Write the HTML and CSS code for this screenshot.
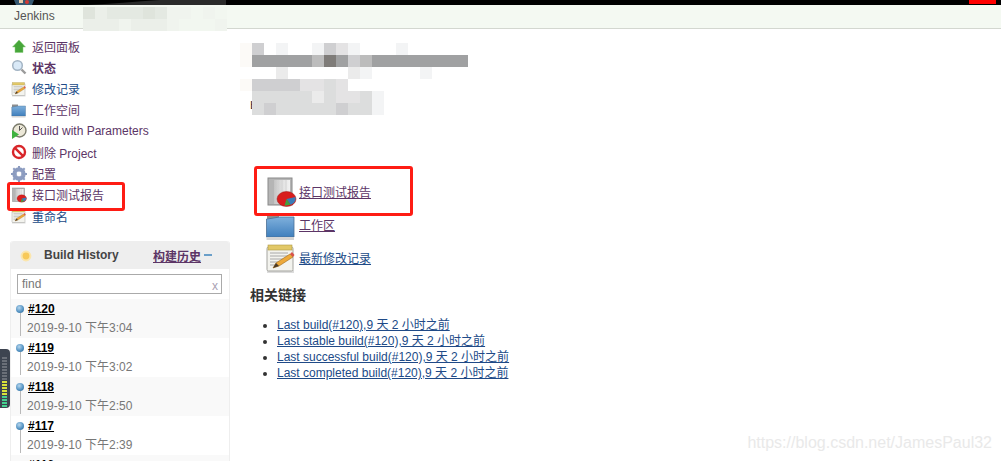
FILE: index.html
```html
<!DOCTYPE html>
<html lang="en">

<head>
    <meta charset="UTF-8">
    <meta name="viewport" content="width=device-width, initial-scale=1.0">
    <title>Jenkins</title>
    <link rel="stylesheet" href="styles.css">
</head>

<body>
    <svg class="icon-defs" width="0" height="0">
        <defs>
            <linearGradient id="folderFill" x1="0" y1="0" x2="0" y2="1">
                <stop offset="0" stop-color="#7fb0dc" />
                <stop offset="1" stop-color="#3f7fbd" />
            </linearGradient>
            <linearGradient id="sheetFill" x1="0" y1="0" x2="1" y2="0">
                <stop offset="0" stop-color="#c4c4c4" />
                <stop offset="0.5" stop-color="#e0e0e0" />
                <stop offset="1" stop-color="#f2f2f2" />
            </linearGradient>
            <symbol id="i-note" viewBox="0 0 32 32">
                <rect x="2" y="28" width="27" height="3" fill="#dcdcdc" />
                <rect x="2" y="5" width="26" height="24" rx="1.5" fill="#f3f3ee" stroke="#a5a5a0" />
                <rect x="3" y="3" width="24" height="5" fill="#e2c868" stroke="#b09a45" stroke-width="0.6" />
                <path d="M5 11h18M5 14h18M5 17h15M5 20h10M5 23h7" stroke="#a8a8a8" stroke-width="1" />
                <path d="M8 26l3-5 14-9 3 3-14 9z" fill="#eda93a" stroke="#a06a1a" stroke-width="0.6" />
                <path d="M8 26l3-5 3 3z" fill="#4a3a2a" />
                <path d="M25 12l3 3 1.5-2-2.5-3z" fill="#d9534a" />
            </symbol>
            <symbol id="i-folder" viewBox="0 0 32 32">
                <path d="M2 5h12v5H2z" fill="#8e8e8e" />
                <path d="M1.5 10h1l12-2h14.5v20H1.5z" fill="url(#folderFill)" stroke="#4a6f94" stroke-width="0.8" />
                <rect x="1.5" y="28" width="27.5" height="3" fill="#d5d5d5" />
            </symbol>
            <symbol id="i-report" viewBox="0 0 32 32">
                <rect x="3" y="2" width="24" height="27" fill="#b5b5b5" stroke="#8a8a8a" />
                <rect x="9" y="4" width="16" height="24" fill="url(#sheetFill)" />
                <path d="M13 4v24M17 4v24M21 4v24" stroke="#d2d2d2" stroke-width="1" />
                <ellipse cx="21.5" cy="23" rx="9.5" ry="7.5" fill="#d81e1e" stroke="#9c1414" stroke-width="0.5" />
                <path d="M21.5 23l9-2c.6 3.4-1.2 6.6-5 7.8z" fill="#3b7cb8" />
                <path d="M21.5 23l4 5.8-6 1z" fill="#3fa23f" />
            </symbol>
        </defs>
    </svg>

    <div class="top-bar">
        <svg class="logo-head" viewBox="0 0 22 5" width="22" height="5">
            <path d="M1 0h20l-2 5H3z" fill="#34566f" />
            <circle cx="14" cy="2" r="2" fill="#d33833" />
            <rect x="6" y="0" width="4" height="3" fill="#e8c9a8" />
        </svg>
        <svg class="top-smudge" viewBox="0 0 156 6" width="156" height="6">
            <path d="M0 5.5C30 5 60 2 90 0H156V6H0z" fill="#2a2a2a" />
        </svg>
        <span class="top-alert"></span>
    </div>

    <header class="breadcrumb">
        <span class="crumb">Jenkins</span>
        <div class="crumb-blur">
            <i class="b1"></i><i class="b3"></i><i class="b2"></i><i class="b2"></i><i class="b2"></i><i class="b1"></i><i class="b2"></i><i class="b4"></i><i class="b4"></i><i class="b5"></i><i class="b4"></i><i class="b5"></i>
            <i class="b3"></i><i class="b3"></i><i class="b3"></i><i class="b4"></i><i class="b3"></i><i class="b3"></i><i class="b3"></i><i class="b4"></i><i class="b5"></i><i class="b5"></i><i class="b5"></i><i class="b4"></i>
        </div>
    </header>

    <div class="layout">
        <aside class="sidebar">
            <nav class="tasks">
                <a class="task visited" href="#">
                    <svg class="task-icon" viewBox="0 0 16 16">
                        <path d="M8 2l6.5 7H12v5.5H4V9H1.500z" fill="#47a63a" stroke="#8bcf7d" stroke-width="0.5" />
                    </svg>返回面板</a>
                <a class="task visited strong" href="#">
                    <svg class="task-icon" viewBox="0 0 16 16">
                        <circle cx="6.500" cy="6.500" r="4.800" fill="#d9e9f7" stroke="#a3b4c4" stroke-width="1.500" />
                        <path d="M10.500 10.500l4 4" stroke="#9a9a9a" stroke-width="2.400" />
                    </svg>状态</a>
                <a class="task link" href="#"><svg class="task-icon">
                        <use href="#i-note" />
                    </svg>修改记录</a>
                <a class="task visited" href="#"><svg class="task-icon">
                        <use href="#i-folder" />
                    </svg>工作空间</a>
                <a class="task visited" href="#">
                    <svg class="task-icon" viewBox="0 0 16 16">
                        <circle cx="8.500" cy="7.500" r="6.500" fill="#ece8d8" stroke="#7b7b6c" stroke-width="1.400" />
                        <path d="M8.500 7.500l3-3M8.500 7.500V3" stroke="#555" stroke-width="1" />
                        <path d="M1 7l7 4.500L1 16z" fill="#3fb23f" />
                    </svg>Build with Parameters</a>
                <a class="task visited" href="#">
                    <svg class="task-icon" viewBox="0 0 16 16">
                        <circle cx="8" cy="8" r="6" fill="#fff" stroke="#d8262a" stroke-width="2.400" />
                        <path d="M3.800 3.800l8.400 8.400" stroke="#d8262a" stroke-width="2.400" />
                    </svg>删除 Project</a>
                <a class="task visited" href="#">
                    <svg class="task-icon" viewBox="0 0 16 16">
                        <circle cx="8" cy="8" r="5" fill="none" stroke="#8c9cc0" stroke-width="3.400" />
                        <path d="M8 0v16M0 8h16M2.300 2.300l11.400 11.400M13.700 2.300L2.300 13.700" stroke="#8c9cc0" stroke-width="2" />
                        <circle cx="8" cy="8" r="2.400" fill="#fff" />
                    </svg>配置</a>
                <a class="task visited" href="#"><svg class="task-icon">
                        <use href="#i-report" />
                    </svg>接口测试报告</a>
                <a class="task link" href="#"><svg class="task-icon">
                        <use href="#i-note" />
                    </svg>重命名</a>
            </nav>

            <section class="history">
                <div class="history-head">
                    <svg class="sun" viewBox="0 0 12 12" width="12" height="12">
                        <circle cx="6" cy="6" r="4.400" fill="#f7c95a" stroke="#fbe6ad" stroke-width="2" />
                    </svg>
                    <span class="history-title">Build History</span>
                    <a class="history-trend" href="#">构建历史</a>
                    <span class="history-dash"></span>
                </div>
                <div class="history-search">
                    <div class="search-box"><span>find</span><span class="search-x">x</span></div>
                </div>
                <div class="build odd">
                    <a class="build-no" href="#">#120</a>
                    <div class="build-date">2019-9-10 下午3:04</div>
                </div>
                <div class="build">
                    <a class="build-no" href="#">#119</a>
                    <div class="build-date">2019-9-10 下午3:02</div>
                </div>
                <div class="build odd">
                    <a class="build-no" href="#">#118</a>
                    <div class="build-date">2019-9-10 下午2:50</div>
                </div>
                <div class="build">
                    <a class="build-no" href="#">#117</a>
                    <div class="build-date">2019-9-10 下午2:39</div>
                </div>
                <div class="build odd">
                    <a class="build-no" href="#">#116</a>
                </div>
            </section>
        </aside>

        <main class="content">
            <div class="mosaic">
                <i class="m9"></i><i class="m4"></i><i></i><i class="m8"></i><i></i><i></i><i class="m8"></i><i class="m4"></i><i class="m6"></i><i class="m8"></i><i></i><i></i><i></i><i class="m8"></i><i></i><i></i><i></i><i></i><i></i>
                <i class="m9"></i><i class="m2"></i><i class="m2"></i><i class="m2"></i><i class="m2"></i><i class="m2"></i><i class="m3"></i><i class="m1"></i><i class="m2"></i><i class="m4"></i><i class="m3"></i><i class="m2"></i><i class="m2"></i><i class="m2"></i><i class="m2"></i><i class="m2"></i><i class="m2"></i><i class="m2"></i><i class="m2"></i>
                <i></i><i></i><i></i><i class="m7"></i><i></i><i></i><i></i><i></i><i></i><i class="m7"></i><i class="m8"></i><i></i><i></i><i></i><i></i><i class="m8"></i><i></i><i></i><i></i>
                <i class="m9"></i><i class="m4"></i><i class="m4"></i><i class="m4"></i><i class="m4"></i><i class="m6"></i><i class="m6"></i><i class="m5"></i><i class="m6"></i><i></i><i></i><i></i><i></i><i></i><i></i><i></i><i></i><i></i><i></i>
                <i></i><i class="m5"></i><i class="m5"></i><i class="m5"></i><i class="m5"></i><i class="m5"></i><i class="m7"></i><i class="m5"></i><i class="m6"></i><i class="m6"></i><i class="m5"></i><i class="m8"></i><i></i><i></i><i></i><i></i><i></i><i></i><i></i>
                <i class="mosaic-letter">E</i><i class="m5"></i><i class="m4"></i><i class="m5"></i><i class="m5"></i><i class="m5"></i><i class="m5"></i><i class="m5"></i><i class="m4"></i><i class="m5"></i><i class="m5"></i><i class="m8"></i><i></i><i></i><i></i><i></i><i></i><i></i><i></i>
            </div>

            <div class="main-links">
                <div class="main-link"><svg class="main-icon">
                        <use href="#i-report" />
                    </svg><a class="visited" href="#">接口测试报告</a></div>
                <div class="main-link"><svg class="main-icon">
                        <use href="#i-folder" />
                    </svg><a class="visited" href="#">工作区</a></div>
                <div class="main-link"><svg class="main-icon">
                        <use href="#i-note" />
                    </svg><a class="link" href="#">最新修改记录</a></div>
            </div>

            <h2 class="section-title">相关链接</h2>
            <ul class="permalinks">
                <li><a href="#">Last build(#120),9 天 2 小时之前</a></li>
                <li><a href="#">Last stable build(#120),9 天 2 小时之前</a></li>
                <li><a href="#">Last successful build(#120),9 天 2 小时之前</a></li>
                <li><a href="#">Last completed build(#120),9 天 2 小时之前</a></li>
            </ul>
        </main>
    </div>

    <!-- annotations on top of the screenshot -->
    <div class="mark mark-side"></div>
    <div class="mark mark-main"></div>

    <div class="meter">
        <span class="off"></span><span class="off"></span><span class="off"></span><span class="off"></span>
        <span class="off"></span><span class="off"></span><span class="off"></span><span class="off"></span>
        <span class="yel"></span><span class="yel"></span><span class="yel"></span><span class="yel"></span>
        <span class="yel"></span><span class="grn"></span><span class="grn"></span><span class="grn"></span>
        <span class="grn"></span>
    </div>

    <div class="watermark">https://blog.csdn.net/JamesPaul32</div>
</body>

</html>
```

FILE: styles.css
```css
html,
body {
    height: 100%;
    overflow: hidden;
}

body {
    margin: 0;
    position: relative;
    background: #fff;
    color: #333;
    font-family: "Liberation Sans", "Noto Sans CJK SC", sans-serif;
    font-size: 12px;
}

a {
    text-decoration: none;
}

.icon-defs {
    position: absolute;
}

.top-bar {
    display: flex;
    height: 5px;
    background: #000;
    overflow: hidden;
}

.logo-head {
    margin-left: 13px;
    flex: none;
}

.top-smudge {
    margin-left: 35px;
    flex: none;
}

.top-alert {
    width: 27px;
    height: 4px;
    margin-left: auto;
    margin-right: 5px;
    background: #f00;
}

.breadcrumb {
    display: flex;
    height: 23px;
    background: #f4f9f2;
    border-bottom: 1px solid #d3d7d0;
}

.crumb {
    margin-left: 14px;
    line-height: 23px;
    color: #555;
}

.crumb-blur {
    display: grid;
    grid-template-columns: repeat(12, 12px);
    grid-auto-rows: 12px;
    margin-left: 28px;
    margin-top: 2px;
    height: 24px;
}

.crumb-blur .b1 { background: #dfe4dc; }
.crumb-blur .b2 { background: #e4e9e2; }
.crumb-blur .b3 { background: #ebefe9; }
.crumb-blur .b4 { background: #f0f4ee; }
.crumb-blur .b5 { background: #f2f7f0; }

.layout {
    display: flex;
}

.sidebar {
    flex: none;
    width: 230px;
}

.tasks {
    display: flex;
    flex-direction: column;
    padding-top: 6.5px;
}

.task {
    display: flex;
    align-items: center;
    height: 21.25px;
    padding-left: 11px;
    white-space: nowrap;
}

.task-icon {
    flex: none;
    width: 16px;
    height: 16px;
    margin-right: 5px;
}

.visited {
    color: #5c3566;
}

.link {
    color: #204a87;
}

.strong {
    font-weight: bold;
}

.history {
    margin-top: 14.5px;
    margin-left: 10px;
    border-radius: 3px 3px 0 0;
    border-right: 1px solid #eee;
    border-left: 1px solid #eee;
}

.history-head {
    display: flex;
    align-items: center;
    height: 28px;
    background: #eee;
    border-radius: 3px 3px 0 0;
    font-weight: bold;
}

.sun {
    margin-left: 9px;
    margin-top: 2px;
}

.history-title {
    margin-left: 12px;
    width: 109px;
    color: #444;
}

.history-trend {
    color: #5c3566;
    text-decoration: underline;
}

.history-dash {
    width: 8px;
    height: 2px;
    margin-left: 3px;
    background: #6a9fc9;
}

.history-search {
    padding: 5px 7px 5px 6px;
}

.search-box {
    display: flex;
    justify-content: space-between;
    height: 16px;
    padding: 1px 3px 1px 4px;
    border: 1px solid #aaa;
    line-height: 16px;
    color: #777;
}

.search-x {
    color: #a9a0b3;
    padding-top: 2px;
}

.build {
    position: relative;
    box-sizing: border-box;
    height: 39px;
    padding-left: 16px;
}

.build.odd {
    background: #f9f9f9;
}

.build::before {
    content: "";
    position: absolute;
    left: 5px;
    top: 6px;
    width: 8px;
    height: 8px;
    border-radius: 50%;
    background: radial-gradient(circle at 40% 35%, #b5d6ee, #4f8fc0 60%, #2b5f8a);
}

.build::after {
    content: "";
    position: absolute;
    left: 9px;
    top: 14px;
    width: 1px;
    height: 23px;
    background: #b9b9b9;
}

.build-no {
    display: inline-block;
    line-height: 14px;
    margin-top: 3px;
    margin-left: 1px;
    color: #000;
    font-weight: bold;
    text-decoration: underline;
}

.build-date {
    margin-top: 4px;
    line-height: 16px;
    color: #777;
}

.content {
    flex: 1;
    padding: 14px 0 0 20px;
}

.mosaic {
    display: grid;
    grid-template-columns: repeat(19, 12px);
    grid-auto-rows: 12px;
    margin-left: -10px;
}

.mosaic .m1 { background: #7f7c79; }
.mosaic .m2 { background: #a0a1a2; }
.mosaic .m3 { background: #bcbcbc; }
.mosaic .m4 { background: #cfcfd1; }
.mosaic .m5 { background: #dcdddd; }
.mosaic .m6 { background: #e4e3e4; }
.mosaic .m7 { background: #ebebeb; }
.mosaic .m8 { background: #f3f4f5; }
.mosaic .m9 { background: #fcfaf7; }

.mosaic-letter {
    padding-left: 10px;
    margin-top: -2px;
    font-style: normal;
    line-height: 8px;
    overflow: hidden;
    color: #333;
}

.main-links {
    margin-top: 60px;
    padding-left: 15px;
}

.main-link {
    display: flex;
    align-items: center;
    height: 33px;
}

.main-link a {
    text-decoration: underline;
}

.main-icon {
    flex: none;
    width: 32px;
    height: 32px;
    margin-right: 2px;
}

.section-title {
    margin: 13px 0 0;
    font-size: 14px;
    line-height: 16px;
    color: #333;
}

.permalinks {
    margin: 14px 0 0;
    padding-left: 27px;
    line-height: 16px;
}

.permalinks a {
    color: #204a87;
    text-decoration: underline;
}

.mark {
    position: absolute;
    box-sizing: border-box;
    border: 3px solid #fe1c14;
    border-radius: 3px;
}

.mark-side {
    left: 7px;
    top: 182px;
    width: 118px;
    height: 29px;
}

.mark-main {
    left: 254px;
    top: 166px;
    width: 159px;
    height: 50px;
}

.meter {
    position: absolute;
    left: 0;
    top: 349px;
    box-sizing: border-box;
    width: 10px;
    height: 59px;
    padding: 8px 3px 0 2px;
    background: #3d4450;
    border-radius: 0 4px 4px 0;
    display: flex;
    flex-direction: column;
    gap: 1px;
}

.meter span {
    height: 2px;
}

.meter .off { background: #6a6f78; }
.meter .yel { background: #d8e23a; }
.meter .grn { background: #45d08f; }

.watermark {
    position: absolute;
    right: 9px;
    top: 434px;
    font-size: 16px;
    line-height: 18px;
    color: #e9e9e9;
}
```
